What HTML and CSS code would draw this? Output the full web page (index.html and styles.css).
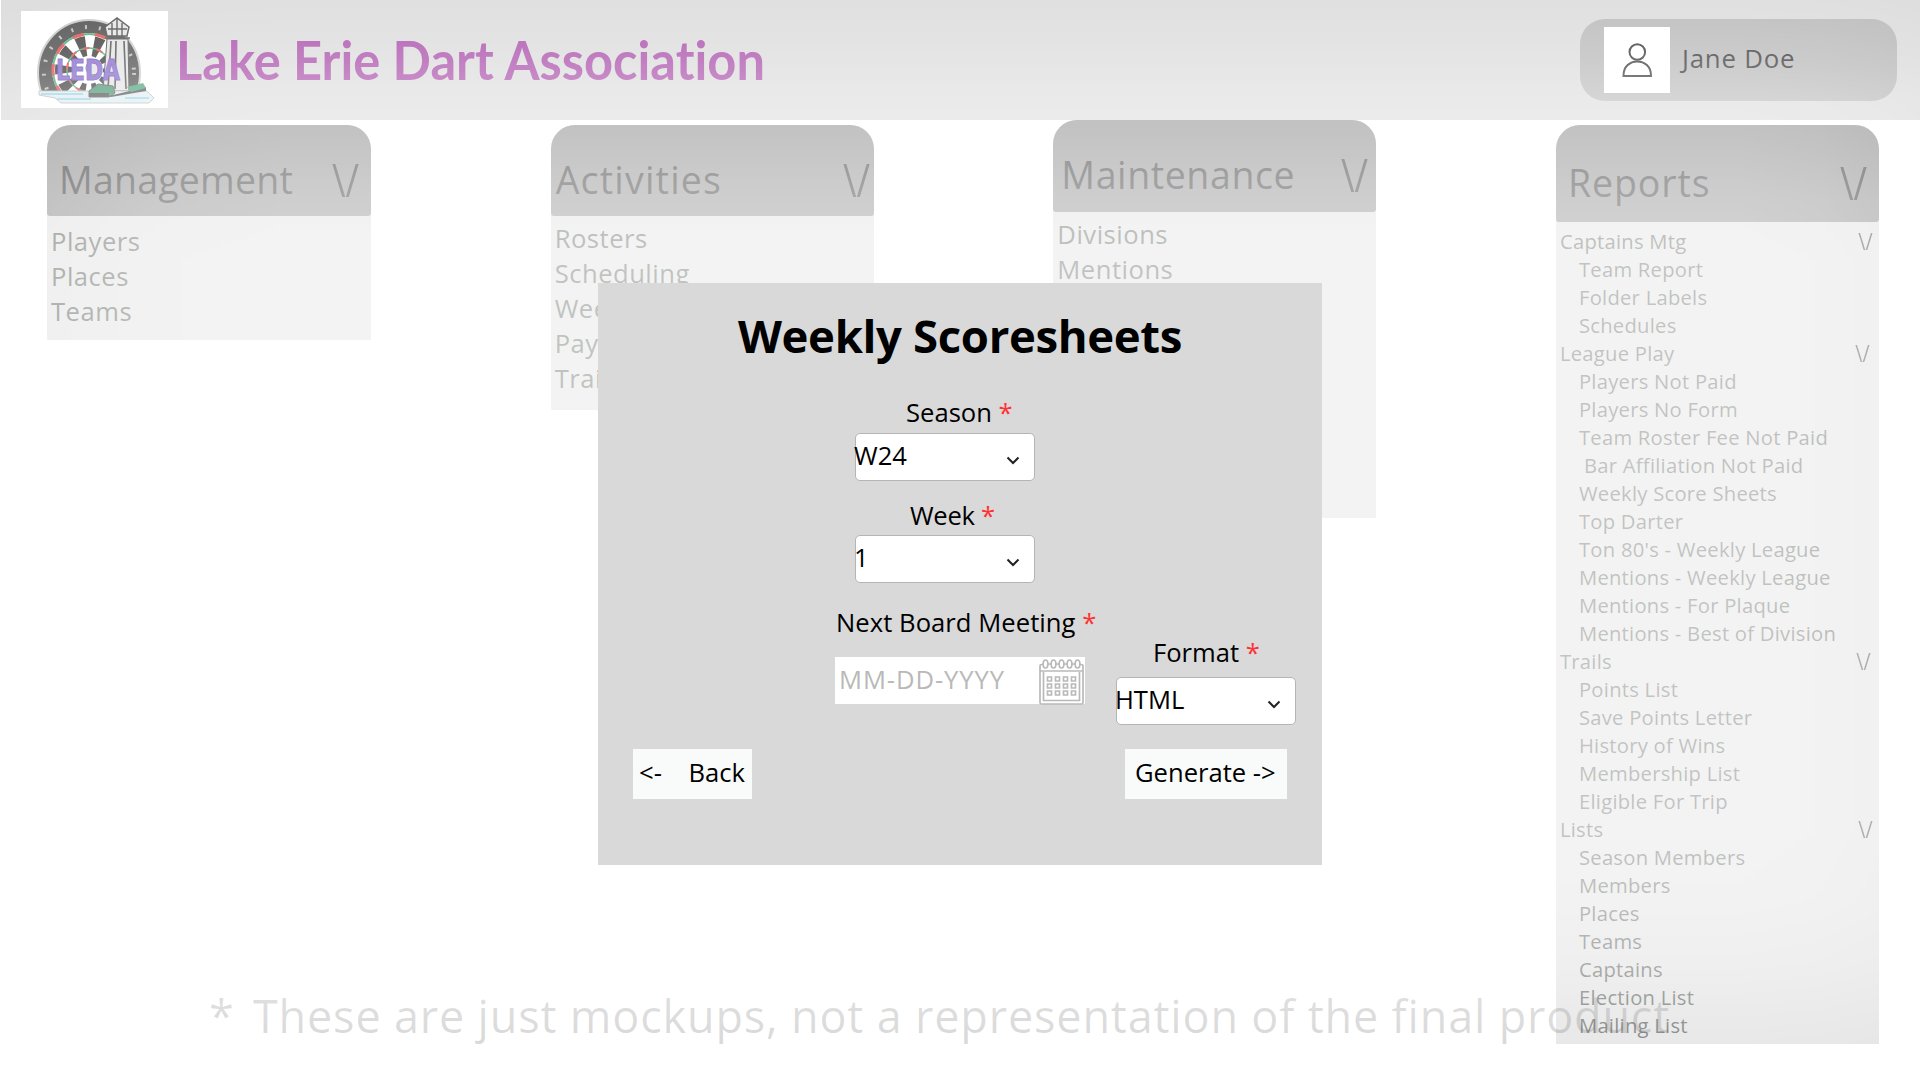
FILE: index.html
```html
<!DOCTYPE html>
<html lang="en">
<head>
<meta charset="utf-8">
<title>Lake Erie Dart Association</title>
<link rel="stylesheet" href="styles.css">
</head>
<body>
<header class="topbar">
  <div class="brand">
    <svg class="logo" viewBox="0 0 147 97">
      <clipPath id="waterline"><rect width="147" height="81"/></clipPath>
      <rect width="147" height="97" fill="#fff"/>
      <g clip-path="url(#waterline)">
        <ellipse cx="68" cy="62" rx="51" ry="53" fill="#222" stroke="#bbb" stroke-width="2"/>
        <ellipse cx="68" cy="62" rx="45" ry="46" fill="none" stroke="#aaa" stroke-width="4" stroke-dasharray="2 12"/>
        <circle cx="68" cy="59" r="37" fill="#fff"/>
        <circle cx="68" cy="59" r="24" fill="none" stroke="#111" stroke-width="20" stroke-dasharray="7.540 7.540" stroke-dashoffset="3.770"/>
        <circle cx="68" cy="59" r="36" fill="none" stroke="#295" stroke-width="2"/>
        <circle cx="68" cy="59" r="36" fill="none" stroke="#d22" stroke-width="3" stroke-dasharray="11.310 11.310" stroke-dashoffset="5.650"/>
        <circle cx="68" cy="59" r="22" fill="none" stroke="#295" stroke-width="1.500"/>
        <circle cx="68" cy="59" r="22" fill="none" stroke="#d22" stroke-width="2" stroke-dasharray="6.900 6.900"/>
      </g>
      <circle cx="72" cy="57" r="7" fill="#ddd" stroke="#333"/>
      <path d="M86 28H107L108 80H82Z" fill="#ddd" stroke="#222"/>
      <path d="M90 30L87 78M95 30L94 78M103 30L105 78" stroke="#222" stroke-width="1.600"/>
      <path d="M84 16L96 7L108 16L106 25H86Z" fill="#ddd" stroke="#222" stroke-width="1.500"/>
      <path d="M91 12V25M96 8V25M101 12V25M87 18H106M84 27H109" stroke="#222" stroke-width="1.400"/>
      <path d="M18 80H126L133 87L128 92H40L34 87L18 84Z" fill="#d5e9ef" stroke="#aaa"/>
      <path d="M20 83H62M36 88H70M104 87H128" stroke="#6ac0da" stroke-width="1.600"/>
      <path d="M68 80L77 73L92 75L94 82L88 86H68Z" fill="#1a7a4e" stroke="#333"/>
      <path d="M68 82H88V86H68ZM88 85L125 76V80L90 86Z" fill="#222"/>
      <path d="M106 76L122 72L125 77L110 81Z" fill="#1a8a54"/>
      <text class="logo-word" x="35" y="69" textLength="64" lengthAdjust="spacingAndGlyphs">LEDA</text>
    </svg>
    <h1 class="site-title">Lake Erie Dart Association</h1>
  </div>
  <div class="user">
    <svg class="avatar" viewBox="0 0 66 66">
      <rect width="66" height="66" fill="#fff"/>
      <g fill="none" stroke="#000" stroke-width="2"><circle cx="33.300" cy="25" r="7.800"/><path d="M19.500 49C19 29.500 47.500 29.500 47 49Z"/></g>
    </svg>
    <span class="user-name">Jane Doe</span>
  </div>
</header>

<main class="board">
  <section class="panel management">
    <h2 class="panel-head"><span>Management</span><span class="arrow">\/</span></h2>
    <ul class="links"><li>Players</li><li>Places</li><li>Teams</li></ul>
  </section>
  <section class="panel activities">
    <h2 class="panel-head"><span>Activities</span><span class="arrow">\/</span></h2>
    <ul class="links"><li>Rosters</li><li>Scheduling</li><li>Weekly</li><li>Payouts</li><li>Trails</li></ul>
  </section>
  <section class="panel maintenance">
    <h2 class="panel-head"><span>Maintenance</span><span class="arrow">\/</span></h2>
    <ul class="links"><li>Divisions</li><li>Mentions</li></ul>
  </section>
  <section class="panel reports">
    <h2 class="panel-head"><span>Reports</span><span class="arrow">\/</span></h2>
    <ul class="tree">
      <li class="group"><span>Captains Mtg</span><span class="arrow a1">\/</span></li>
      <li>Team Report</li><li>Folder Labels</li><li>Schedules</li>
      <li class="group"><span>League Play</span><span class="arrow a2">\/</span></li>
      <li>Players Not Paid</li><li>Players No Form</li><li>Team Roster Fee Not Paid</li><li class="nudge">Bar Affiliation Not Paid</li><li>Weekly Score Sheets</li><li>Top Darter</li><li>Ton 80's - Weekly League</li><li>Mentions - Weekly League</li><li>Mentions - For Plaque</li><li>Mentions - Best of Division</li>
      <li class="group"><span>Trails</span><span class="arrow a3">\/</span></li>
      <li>Points List</li><li>Save Points Letter</li><li>History of Wins</li><li>Membership List</li><li>Eligible For Trip</li>
      <li class="group"><span>Lists</span><span class="arrow">\/</span></li>
      <li>Season Members</li><li>Members</li><li>Places</li><li>Teams</li><li>Captains</li><li>Election List</li><li>Mailing List</li>
    </ul>
  </section>
</main>

<p class="disclaimer"><span class="mark">*</span><span class="note">These are just mockups, not a representation of the final product</span></p>
<div class="veil"></div>

<form class="dialog">
  <h2 class="dialog-title">Weekly Scoresheets</h2>
  <div class="field season">
    <label>Season <b>*</b></label>
    <div class="select"><span>W24</span><svg viewBox="0 0 14 9"><path d="M1.500 1.500L7 7L12.500 1.500"/></svg></div>
  </div>
  <div class="field week">
    <label>Week <b>*</b></label>
    <div class="select"><span>1</span><svg viewBox="0 0 14 9"><path d="M1.500 1.500L7 7L12.500 1.500"/></svg></div>
  </div>
  <div class="pair">
    <div class="field meeting">
      <label>Next Board Meeting <b>*</b></label>
      <div class="date"><span>MM-DD-YYYY</span>
        <svg viewBox="0 0 45 46" fill="none" stroke="#b9b9b9" stroke-width="1.700">
          <path d="M4 5.500H2.500Q1 5.500 1 7V43.500Q1 45 2.500 45H42.500Q44 45 44 43.500V7Q44 5.500 42.500 5.500H41M1 12H44M4.500 13V41.500H40.500V13"/>
          <g><ellipse cx="6.500" cy="5" rx="2.400" ry="4"/><ellipse cx="14.500" cy="5" rx="2.400" ry="4"/><ellipse cx="22.500" cy="5" rx="2.400" ry="4"/><ellipse cx="30.500" cy="5" rx="2.400" ry="4"/><ellipse cx="38.500" cy="5" rx="2.400" ry="4"/><path d="M9 5H12M17 5H20M25 5H28M33 5H36"/></g>
          <path d="M8.500 18h4v4h-4zM16.500 18h4v4h-4zM24.500 18h4v4h-4zM32.500 18h4v4h-4zM8.500 25h4v4h-4zM16.500 25h4v4h-4zM24.500 25h4v4h-4zM32.500 25h4v4h-4zM8.500 32h4v4h-4zM16.500 32h4v4h-4zM24.500 32h4v4h-4zM32.500 32h4v4h-4z"/>
        </svg>
      </div>
    </div>
    <div class="field format">
      <label>Format <b>*</b></label>
      <div class="select"><span>HTML</span><svg viewBox="0 0 14 9"><path d="M1.500 1.500L7 7L12.500 1.500"/></svg></div>
    </div>
  </div>
  <div class="actions">
    <button type="button" class="back"><span>&lt;-</span><span>Back</span></button>
    <button type="button" class="generate"><span>Generate -&gt;</span></button>
  </div>
</form>
</body>
</html>
```
FILE: styles.css
```css
* { box-sizing: border-box; }
body { margin: 0; width: 1920px; height: 1080px; overflow: hidden; position: relative; background: #fff; font-family: "Open Sans", sans-serif; color: #000; }
h1, h2, ul, p { margin: 0; padding: 0; font-weight: 400; }
ul { list-style: none; }

.topbar { height: 120px; margin-left: 1px; padding: 0 23px 0 20px; display: flex; justify-content: space-between; align-items: center; background: #d2d2d2; }
.brand { display: flex; align-items: center; gap: 8px; padding-bottom: 1px; }
.logo { width: 147px; height: 97px; display: block; }
.logo-word { font: 700 29px "DejaVu Sans", sans-serif; fill: #6a48c0; stroke: #5530b5; stroke-width: 1; }
.site-title { font: 700 54px/80px Lato, sans-serif; font-variant-ligatures: none; color: #931f93; white-space: nowrap; transform: scaleX(.937); transform-origin: left; }
.user { width: 317px; height: 82px; border-radius: 25px; padding-left: 24px; display: flex; align-items: center; gap: 12px; background: #a6a6a6; }
.avatar { width: 66px; height: 66px; }
.user-name { font-size: 25.800px; line-height: 36px; letter-spacing: .8px; padding-bottom: 4px; }

.board { display: flex; justify-content: space-between; align-items: flex-start; padding: 0 41px 0 47px; height: 924px; }
.panel { width: 323px; margin-top: 5px; background: #d9d9d9; border-radius: 24px 24px 0 0; }
.panel:first-child { width: 324px; }
.panel-head { height: 91px; display: flex; justify-content: space-between; padding: 30px 12px 0 12px; font-size: 37.500px; line-height: 50px; letter-spacing: .2px; background: #737373; border-radius: 24px 24px 3px 3px; }
.arrow { font-size: 45px; transform: scaleX(.82); transform-origin: right; letter-spacing: 0; }
.links { padding: 8px 0 0 4px; font-size: 25.600px; line-height: 35px; letter-spacing: .5px; color: #363d35; }
.management { height: 215px; }
.activities { height: 285px; }
.activities .panel-head { padding-left: 5px; padding-right: 4px; letter-spacing: 1.200px; }
.activities .links { padding-top: 5px; }
.maintenance { margin-top: 0; height: 398px; }
.maintenance .panel-head { height: 92px; padding-left: 8px; padding-right: 8px; letter-spacing: .6px; }
.maintenance .links { padding-top: 5px; }
.reports { height: 919px; }
.reports .panel-head { height: 97px; padding-left: 12px; padding-top: 33px; letter-spacing: .9px; }
.tree { padding: 5px 6px 0 4px; font-size: 20.200px; line-height: 28px; letter-spacing: .26px; color: #3a3e3a; }
.tree li { padding-left: 19px; white-space: nowrap; }
.tree .nudge { padding-left: 24px; }
.tree .group { padding-left: 0; display: flex; justify-content: space-between; }
.tree .arrow { font-size: 24px; color: #222; }
.tree .a2 { margin-right: 3px; }
.tree .a3 { margin-right: 2px; }

.disclaimer { position: absolute; left: 209px; top: 986px; display: flex; font-size: 45px; line-height: 60px; letter-spacing: .820px; color: rgba(0,0,0,.25); white-space: nowrap; }
.mark { width: 44px; }

/* White haze that thins out toward the window edges */
.veil { position: absolute; inset: 0; background: rgba(255,255,255,.69);
  mask-image: linear-gradient(to bottom, rgba(0,0,0,.45) 0, rgba(0,0,0,.5) 20px, rgba(0,0,0,.62) 60px, rgba(0,0,0,.78) 100px, rgba(0,0,0,.82) 125px, rgba(0,0,0,.95) 200px, #000 260px, #000 830px, rgba(0,0,0,.96) 900px, rgba(0,0,0,.84) 965px, rgba(0,0,0,.62) 1033px, rgba(0,0,0,.5) 1080px), linear-gradient(to right, rgba(0,0,0,.84) 0, rgba(0,0,0,.88) 50px, rgba(0,0,0,.96) 150px, #000 280px, #000 1740px, rgba(0,0,0,.97) 1820px, rgba(0,0,0,.91) 1880px, rgba(0,0,0,.86) 1920px);
  mask-composite: intersect; }

.dialog { position: absolute; left: 598px; top: 283px; width: 724px; height: 582px; background: #d9d9d9; font-size: 25.600px; line-height: 36px; white-space: nowrap; }
.dialog-title { text-align: center; font-size: 45.500px; font-weight: 700; line-height: 60px; padding-top: 22px; letter-spacing: -.35px; }
.field { width: 180px; display: flex; flex-direction: column; }
.field label b { color: #ff3131; font-weight: 400; }
.select { height: 48px; background: #fff; border: 1px solid #b5b5b5; border-radius: 5px; display: flex; justify-content: space-between; padding: 4px 14px 0 0; }
.select span { margin-left: -2px; }
.select svg { width: 14px; height: 9px; margin-top: 18px; fill: none; stroke: #222; stroke-width: 2; }
.season { margin: 30px 0 0 257px; }
.season label { padding: 0 0 2px 51px; }
.week { margin: 17px 0 0 257px; }
.week label { padding: 0 0 1px 55px; letter-spacing: -.3px; }
.pair { display: flex; justify-content: space-between; margin: 22px 26px 0 237px; height: 144px; }
.meeting { width: 250px; }
.meeting label { padding: 0 0 16px 1px; letter-spacing: .05px; }
.date { height: 47px; background: #fff; color: #b9b9b9; letter-spacing: .9px; display: flex; justify-content: space-between; padding: 5px 1px 0 4px; }
.date svg { width: 45px; height: 46px; margin-top: -3px; }
.format { padding-top: 30px; }
.format label { padding: 0 0 6px 37px; }
.actions { display: flex; justify-content: space-between; padding: 0 35px; }
.actions button { height: 50px; border: 0; background: #f9fbfa; font: inherit; color: #000; display: flex; justify-content: space-between; align-items: center; }
.actions span { margin-top: -2px; }
.back { width: 119px; padding: 0 7px 0 6px; }
.generate { width: 162px; padding: 0 10px; }
```
